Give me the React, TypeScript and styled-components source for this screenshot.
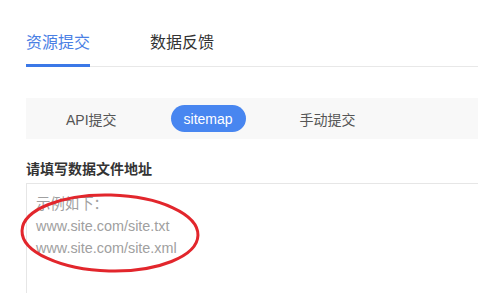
import React from 'react';
import type { ReactElement } from 'react';
import styled, { createGlobalStyle } from 'styled-components';

const TABS = ['资源提交', '数据反馈'];
const MODES = ['API提交', 'sitemap', '手动提交'];
const PLACEHOLDER = '示例如下：\nwww.site.com/site.txt\nwww.site.com/site.xml';

function App(): ReactElement {
  const [tab, setTab] = React.useState(TABS[0]);
  const [mode, setMode] = React.useState(MODES[1]);
  const [urls, setUrls] = React.useState('');

  return (
    <>
      <GlobalStyle />
      <Page>
        <Content>
          <TabBar>
            {TABS.map((name) => (
              <Tab key={name} $active={name === tab} onClick={() => setTab(name)}>
                {name}
              </Tab>
            ))}
          </TabBar>

          <ModeBar>
            {MODES.map((name) => (
              <ModeButton
                key={name}
                type="button"
                $active={name === mode}
                onClick={() => setMode(name)}
              >
                {name}
              </ModeButton>
            ))}
          </ModeBar>

          <FieldLabel htmlFor="urls">请填写数据文件地址</FieldLabel>
          <AreaWrapper>
            <UrlArea
              id="urls"
              value={urls}
              placeholder={PLACEHOLDER}
              onChange={(event) => setUrls(event.target.value)}
            />
            {/* hand-drawn annotation circling the example */}
            <Mark viewBox="0 0 200 100" aria-hidden="true">
              <ellipse
                cx="84"
                cy="50"
                rx="88"
                ry="38"
                transform="rotate(1.5 84 50)"
              />
            </Mark>
          </AreaWrapper>
        </Content>
      </Page>
    </>
  );
}

const GlobalStyle = createGlobalStyle`
  html, body {
    margin: 0;
    background: #ffffff;
    overflow: hidden;
  }

  body {
    font-family: "Liberation Sans", "Noto Sans CJK SC", sans-serif;
    color: #333333;
  }
`;

/* the screenshot is a crop of a wider panel: clip it to the frame */
const Page = styled.div`
  width: 478px;
  height: 293px;
  overflow: hidden;
`;

const Content = styled.div`
  width: 480px;
  padding: 31px 0 0 26px;
`;

const TabBar = styled.div`
  display: flex;
  gap: 60px;
  border-bottom: 1px solid #e8e8e8;
`;

const Tab = styled.div<{ $active: boolean }>`
  font-size: 16px;
  line-height: 24px;
  padding-bottom: 9px;
  margin-bottom: -1px;
  border-bottom: 3px solid ${(p) => (p.$active ? '#3b78e7' : 'transparent')};
  color: ${(p) => (p.$active ? '#4a80e4' : '#333333')};
  cursor: pointer;
`;

const ModeBar = styled.div`
  display: flex;
  align-items: center;
  gap: 41px;
  height: 41px;
  margin-top: 31px;
  padding-left: 27px;
  background: #f8f8f8;
`;

const ModeButton = styled.button<{ $active: boolean }>`
  height: 27px;
  padding: 0 13px;
  border: none;
  border-radius: 14px;
  font-family: inherit;
  font-size: 14px;
  background: ${(p) => (p.$active ? '#4886f0' : 'transparent')};
  color: ${(p) => (p.$active ? '#ffffff' : '#555555')};
  cursor: pointer;
`;

const FieldLabel = styled.label`
  display: block;
  margin-top: 20px;
  margin-bottom: 4px;
  font-size: 14px;
  line-height: 20px;
  font-weight: 700;
  color: #333333;
`;

const AreaWrapper = styled.div`
  position: relative;
`;

const UrlArea = styled.textarea`
  display: block;
  box-sizing: border-box;
  width: 100%;
  height: 130px;
  margin: 0;
  padding: 9px 9px 8px;
  border: 1px solid #e6e6e6;
  resize: none;
  font-family: "Liberation Sans", "Noto Sans CJK SC", sans-serif;
  font-size: 14.4px;
  line-height: 22px;
  color: #333333;
  outline: none;

  &::placeholder {
    color: #a0a0a0;
  }
`;

const Mark = styled.svg`
  position: absolute;
  left: 0;
  top: 0;
  width: 200px;
  height: 100px;
  overflow: visible;
  pointer-events: none;

  ellipse {
    fill: none;
    stroke: #e2262c;
    stroke-width: 3;
  }
`;

export default App;
